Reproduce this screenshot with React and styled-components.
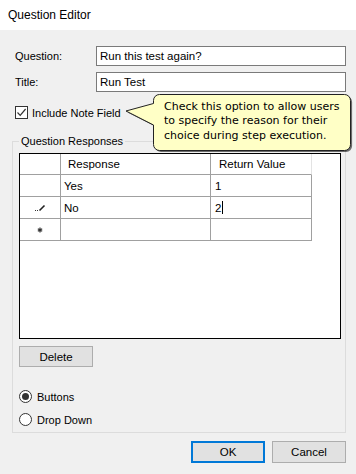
import React from "react";
import styled, { createGlobalStyle } from "styled-components";

const GlobalStyle = createGlobalStyle`
  html, body { margin: 0; padding: 0; background: #f0f0f0; }
  body {
    font-family: "Liberation Sans", Arial, sans-serif;
    font-size: 11px;
    color: #000;
  }
`;

const Window = styled.div`
  position: relative;
  width: 356px;
  height: 474px;
  background: #f0f0f0;
  display: flex;
  flex-direction: column;
  overflow: hidden;
`;

const TitleBar = styled.div`
  height: 30px;
  background: #fff;
  display: flex;
  align-items: center;
  padding-left: 8px;
  font-size: 12px;
`;

const Content = styled.div`
  padding: 16px 10px 0 12px;
  display: flex;
  flex-direction: column;
`;

const FieldRow = styled.div`
  display: flex;
  align-items: center;
  padding-left: 3px;
  height: 20px;
  & + & { margin-top: 6px; }
`;

const Label = styled.span`
  width: 81px;
  flex: none;
`;

const TextInput = styled.input`
  flex: 1;
  min-width: 0;
  height: 20px;
  box-sizing: border-box;
  border: 1px solid #7a7a7a;
  background: #fff;
  padding: 0 3px;
  margin: 0;
  font: inherit;
  font-size: 11.5px;
  color: #000;
  outline: none;
`;

const CheckRow = styled.label`
  margin-top: 14px;
  padding-left: 3px;
  display: flex;
  align-items: center;
  gap: 4px;
  height: 13px;
`;

const CheckBox = styled.span`
  width: 13px;
  height: 13px;
  box-sizing: border-box;
  border: 1px solid #333;
  background: #fff;
  display: flex;
  align-items: center;
  justify-content: center;
`;

const GroupBox = styled.fieldset`
  margin: 15px 0 0 0;
  padding: 5px 4px 6px 6px;
  border: 1px solid #dcdcdc;
  min-width: 0;
  width: 334px;
  box-sizing: border-box;
`;

const Legend = styled.legend`
  padding: 0 2px;
  line-height: 14px;
  font-size: 11px;
`;

const Grid = styled.div`
  width: 322px;
  height: 186px;
  box-sizing: border-box;
  border: 1px solid #000;
  background: #fff;
`;

const GridRow = styled.div`
  display: flex;
  height: ${(p) => p.$h}px;
`;

const Cell = styled.div`
  width: ${(p) => p.$w}px;
  box-sizing: border-box;
  border-right: 1px solid ${(p) => (p.$light ? "#e3e3e3" : "#a0a0a0")};
  border-bottom: 1px solid #a0a0a0;
  padding-left: ${(p) => p.$pl || 0}px;
  display: flex;
  align-items: center;
  justify-content: ${(p) => (p.$center ? "center" : "flex-start")};
  font-size: 11.5px;
`;

const Caret = styled.span`
  display: inline-block;
  width: 1px;
  height: 13px;
  background: #000;
  margin-left: 1px;
`;

const Button = styled.button`
  width: 74px;
  height: ${(p) => p.$h || 22}px;
  box-sizing: border-box;
  border: ${(p) => (p.$default ? "2px solid #0078d7" : "1px solid #adadad")};
  background: #e1e1e1;
  font: inherit;
  font-size: 11.5px;
  color: #000;
  padding: 0;
  margin: 0;
`;

const DeleteButton = styled(Button)`
  margin-top: 7px;
  display: block;
`;

const RadioList = styled.div`
  margin-top: 23px;
  display: flex;
  flex-direction: column;
  gap: 10px;
`;

const RadioRow = styled.label`
  display: flex;
  align-items: center;
  gap: 5px;
  height: 13px;
`;

const RadioCircle = styled.span`
  width: 13px;
  height: 13px;
  box-sizing: border-box;
  border: 1px solid #333;
  border-radius: 50%;
  background: #fff;
  display: flex;
  align-items: center;
  justify-content: center;
  &::after {
    content: "";
    width: 7px;
    height: 7px;
    border-radius: 50%;
    background: ${(p) => (p.$checked ? "#333" : "transparent")};
  }
`;

const Footer = styled.div`
  display: flex;
  justify-content: flex-end;
  gap: 7px;
  padding: 8px 10px 0 0;
`;

const Callout = styled.div`
  position: absolute;
  left: 124px;
  top: 92px;
  width: 232px;
  height: 64px;
`;

const CalloutShape = styled.svg`
  position: absolute;
  inset: 0;
`;

const CalloutText = styled.div`
  position: relative;
  padding: 8px 0 0 40px;
  font-family: "DejaVu Sans", Verdana, sans-serif;
  font-size: 11px;
  line-height: 14.4px;
  color: #000;
`;

const calloutPath =
  "M35.5 2.5 H220.5 A6 6 0 0 1 226.5 8.5 V52.5 A6 6 0 0 1 220.5 58.5 H35.5 A6 6 0 0 1 29.5 52.5 V33 L2 19 L29.5 11.5 V8.5 A6 6 0 0 1 35.5 2.5 Z";

const Pencil = () => (
  <svg width="11" height="8" viewBox="0 0 11 8">
    <rect x="0" y="6" width="1" height="1" fill="#333" />
    <rect x="2" y="6" width="1" height="1" fill="#333" />
    <path d="M4.5 6.5 L9.5 1.5" stroke="#222" strokeWidth="1.6" />
  </svg>
);

const Star = () => (
  <svg width="6" height="6" viewBox="0 0 6 6">
    <path d="M3 0.5 V5.5 M0.8 1.8 L5.2 4.2 M0.8 4.2 L5.2 1.8" stroke="#333" strokeWidth="1.2" />
  </svg>
);

const rows = [
  { marker: null, response: "Yes", value: "1" },
  { marker: "edit", response: "No", value: "2", caret: true },
  { marker: "new", response: "", value: "" },
];

export default function App() {
  return (
    <>
      <GlobalStyle />
      <Window>
        <TitleBar>Question Editor</TitleBar>
        <Content>
          <FieldRow>
            <Label>Question:</Label>
            <TextInput readOnly value="Run this test again?" />
          </FieldRow>
          <FieldRow>
            <Label>Title:</Label>
            <TextInput readOnly value="Run Test" />
          </FieldRow>
          <CheckRow>
            <CheckBox>
              <svg width="11" height="11" viewBox="0 0 11 11">
                <path d="M1.5 5.5 L4.2 8.3 L9.6 2" fill="none" stroke="#333" strokeWidth="1.2" />
              </svg>
            </CheckBox>
            <span>Include Note Field</span>
          </CheckRow>
          <GroupBox>
            <Legend>Question Responses</Legend>
            <Grid>
              <GridRow $h={21}>
                <Cell $w={41} />
                <Cell $w={150} $pl={7}>Response</Cell>
                <Cell $w={101} $pl={8} $light>Return Value</Cell>
              </GridRow>
              {rows.map((r, i) => (
                <GridRow key={i} $h={22}>
                  <Cell $w={41} $center>
                    {r.marker === "edit" && <Pencil />}
                    {r.marker === "new" && <Star />}
                  </Cell>
                  <Cell $w={150} $pl={3}>{r.response}</Cell>
                  <Cell $w={101} $pl={4}>
                    {r.value}
                    {r.caret && <Caret />}
                  </Cell>
                </GridRow>
              ))}
            </Grid>
            <DeleteButton $h={21}>Delete</DeleteButton>
            <RadioList>
              <RadioRow>
                <RadioCircle $checked />
                <span>Buttons</span>
              </RadioRow>
              <RadioRow>
                <RadioCircle />
                <span>Drop Down</span>
              </RadioRow>
            </RadioList>
          </GroupBox>
        </Content>
        <Footer>
          <Button $default>OK</Button>
          <Button>Cancel</Button>
        </Footer>
        <Callout>
          <CalloutShape width="232" height="64" viewBox="0 0 232 64">
            <path d={calloutPath} transform="translate(1.6 1.6)" fill="rgba(0,0,0,0.55)" />
            <path d={calloutPath} fill="#ffffc6" stroke="#222" strokeWidth="1" strokeLinejoin="round" />
          </CalloutShape>
          <CalloutText>
            Check this option to allow users
            <br />
            to specify the reason for their
            <br />
            choice during step execution.
          </CalloutText>
        </Callout>
      </Window>
    </>
  );
}
